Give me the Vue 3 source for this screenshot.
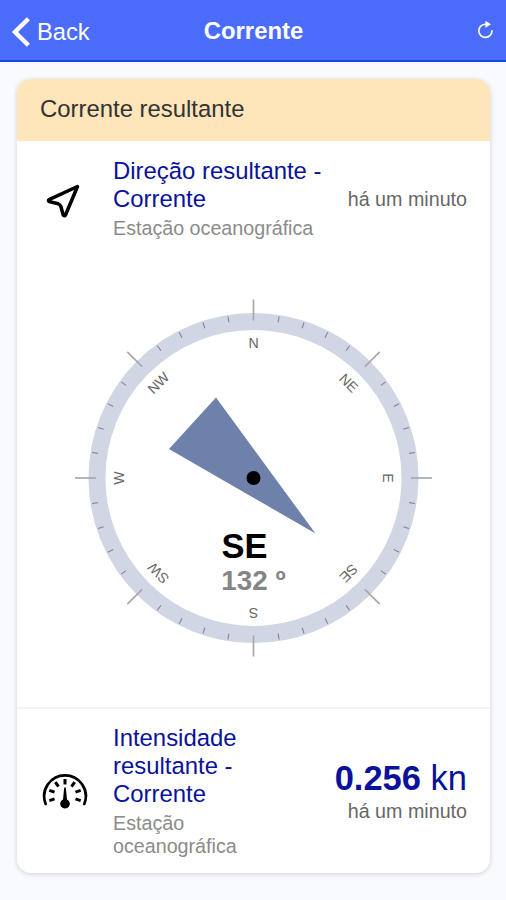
<script setup>
const labels = ['N', 'NE', 'E', 'SE', 'S', 'SW', 'W', 'NW'].map((name, i) => ({ name, angle: i * 45 }))
const minorTicks = Array.from({ length: 40 }, (_, i) => i * 9).filter((angle) => angle % 45 !== 0)
const gaugeTicks = [-108, -72, -36, 0, 36, 72, 108]
</script>

<template>
  <div class="page">
    <header class="bar">
      <div class="back">
        <svg class="chevron" width="20" height="30" viewBox="0 0 20 30">
          <path d="M17.4 1.8 L4 15 L17.4 28.2" fill="none" stroke="#fff" stroke-width="4.4" />
        </svg>
        <span class="back-text">Back</span>
      </div>
      <h1 class="title">Corrente</h1>
      <div class="action">
        <svg width="17" height="18" viewBox="0 0 17 18">
          <path d="M8.6 3.2 H8 A6.6 6.6 0 1 0 15 9.8" fill="none" stroke="#fff" stroke-width="1.6" stroke-linecap="round" />
          <path d="M8.4 -0.2 L14 3.3 L8.4 6.8 Z" fill="#fff" />
        </svg>
      </div>
    </header>

    <main class="content">
      <section class="card">
        <div class="card-head">Corrente resultante</div>

        <div class="row first">
          <div class="icon">
            <svg width="36" height="36" viewBox="0 0 36 36">
              <path d="M31.5 3.5 L3 16.6 Q1.8 17.6 3.4 18.6 L12.2 20.8 Q14.3 21.5 14.9 23.6 L17.2 32 Q18.4 33.6 19.5 32 Z" fill="none" stroke="#000" stroke-width="3.5" stroke-linejoin="round" />
            </svg>
          </div>
          <div class="label wide">
            <h2>Direção resultante - Corrente</h2>
            <p>Estação oceanográfica</p>
          </div>
          <div class="reading"><span class="ago">há um minuto</span></div>
        </div>

        <div class="compass">
          <svg width="364" height="364" viewBox="-181.5 -182 364 364">
            <circle r="156.5" fill="none" stroke="#d1d6e5" stroke-width="17" />
            <line v-for="a in minorTicks" :key="a" y1="-157.5" y2="-163.5" stroke="#85868c" stroke-width="1.1" :transform="`rotate(${a})`" />
            <g v-for="l in labels" :key="l.name" :transform="`rotate(${l.angle})`">
              <line y1="-157.5" y2="-178.5" stroke="#a8a8aa" stroke-width="1.7" />
              <text class="point" y="-129.6" text-anchor="middle">{{ l.name }}</text>
            </g>
            <path d="M-37.5 -80.5 L-84.5 -29 L62 55.5 Z" fill="#6e81aa" />
            <circle r="7" fill="#000" />
            <text class="heading" x="-32" y="79.5">SE</text>
            <text class="degrees" x="-32.2" y="111.5">132 º</text>
          </svg>
        </div>

        <div class="row second">
          <div class="icon">
            <svg width="46" height="38" viewBox="-23 -23.5 46 38">
              <path d="M-19.3 8.4 A20.8 20.8 0 1 1 19.3 8.4" fill="none" stroke="#000" stroke-width="2.7" stroke-linecap="round" />
              <line v-for="a in gaugeTicks" :key="a" y1="-11" y2="-16.5" stroke="#000" stroke-width="3" :transform="`rotate(${a})`" />
              <path d="M-0.8 -8 H0.8 L2 3.9 A4.8 4.8 0 1 1 -2 3.9 Z" fill="#000" />
            </svg>
          </div>
          <div class="label">
            <h2>Intensidade resultante - Corrente</h2>
            <p>Estação oceanográfica</p>
          </div>
          <div class="reading">
            <span class="value"><b>0.256</b> kn</span>
            <span class="ago">há um minuto</span>
          </div>
        </div>
      </section>
    </main>
  </div>
</template>

<style>
body { margin: 0; background: #f9fafd; }
</style>

<style scoped>
.page {
  height: 900px;
  box-sizing: border-box;
  overflow: hidden;
  background: #f9fafd;
  font-family: "Liberation Sans", Arial, sans-serif;
}
.bar {
  display: grid;
  grid-template-columns: 1fr auto 1fr;
  align-items: center;
  height: 62px;
  box-sizing: border-box;
  padding: 0 12px 0 11px;
  border-bottom: 2px solid #1746e8;
  background: #4b6cfa;
  color: #fff;
}
.back { display: flex; align-items: center; gap: 6px; padding-top: 3px; font-size: 23.7px; }
.back-text { padding-top: 2px; }
.chevron { display: block; }
.title { margin: 0 0 0 2px; padding-top: 1px; font-size: 23.9px; line-height: 28px; font-weight: 700; }
.action { display: flex; justify-content: flex-end; }
.content { padding: 17px 16px 0 17px; }
.card {
  height: 794px;
  border-radius: 14px;
  overflow: hidden;
  background: #fff;
  box-shadow: 0 1px 5px rgba(40, 45, 80, 0.2);
}
.card-head {
  height: 62px;
  box-sizing: border-box;
  padding: 16px 23px 0;
  background: #fee6ba;
  color: #333;
  font-size: 23.9px;
  line-height: 28px;
}
.row { display: flex; align-items: center; box-sizing: border-box; padding: 0 23px 0 25px; }
.first { height: 119px; padding-bottom: 3px; }
.second { height: 166px; padding-bottom: 1px; border-top: 2px solid #f3f3f5; }
.icon { display: flex; width: 46px; flex: none; justify-content: center; }
.first .icon { box-sizing: border-box; padding: 4px 3px 0 0; }
.label { width: 150px; margin-left: 25px; }
.wide { width: 220px; padding-bottom: 1px; }
h2 { margin: 0; color: #0a129b; font-size: 23.9px; font-weight: 400; line-height: 28px; }
p { margin: 4px 0 0; color: #8b8b8b; font-size: 19.7px; line-height: 22.5px; }
.reading { display: flex; flex: 1; flex-direction: column; align-items: flex-end; white-space: nowrap; }
.ago { color: #666; font-size: 19.7px; line-height: 23px; }
.value { padding-bottom: 2px; color: #0a129b; font-size: 34.5px; line-height: 39px; }
.compass { display: flex; height: 447px; box-sizing: border-box; padding-bottom: 12px; align-items: center; justify-content: center; }
.compass svg { display: block; }
.point { fill: #666; font-size: 14.2px; }
.heading { fill: #000; font-size: 34.5px; font-weight: 700; }
.degrees { fill: #858585; font-size: 27.8px; font-weight: 700; }
</style>
